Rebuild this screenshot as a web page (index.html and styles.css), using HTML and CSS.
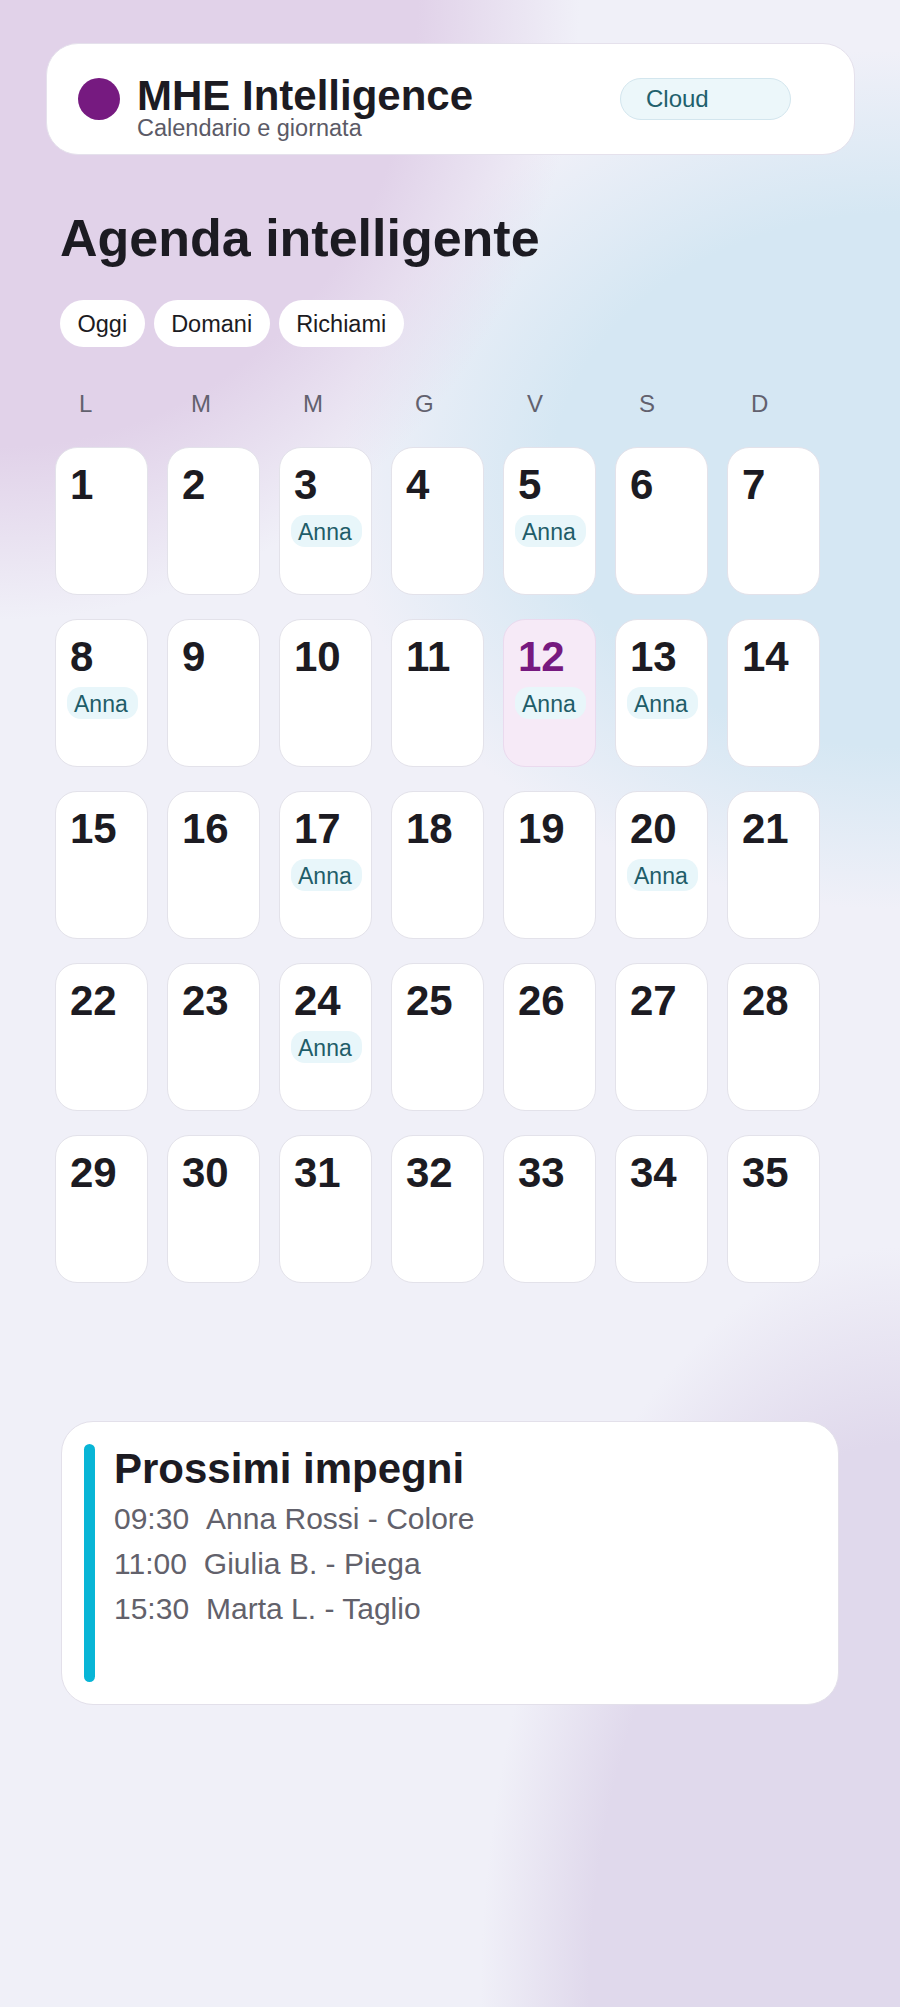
FILE: index.html
```html
<!DOCTYPE html>
<html lang="it">
<head>
<meta charset="utf-8">
<title>MHE Intelligence - Agenda</title>
<link rel="stylesheet" href="styles.css">
</head>
<body>
<div class="page">
  <header class="topbar">
    <span class="logo"></span>
    <div class="brand">
      <div class="brand-title">MHE Intelligence</div>
      <div class="brand-sub">Calendario e giornata</div>
    </div>
    <span class="status">Cloud</span>
  </header>

  <h1 class="heading">Agenda intelligente</h1>

  <nav class="chips">
    <button class="chip">Oggi</button>
    <button class="chip">Domani</button>
    <button class="chip">Richiami</button>
  </nav>

  <div class="weekdays">
    <span>L</span><span>M</span><span>M</span><span>G</span><span>V</span><span>S</span><span>D</span>
  </div>

  <div class="calendar">
    <div class="day"><span class="num">1</span></div>
    <div class="day"><span class="num">2</span></div>
    <div class="day"><span class="num">3</span><span class="tag">Anna</span></div>
    <div class="day"><span class="num">4</span></div>
    <div class="day"><span class="num">5</span><span class="tag">Anna</span></div>
    <div class="day"><span class="num">6</span></div>
    <div class="day"><span class="num">7</span></div>

    <div class="day"><span class="num">8</span><span class="tag">Anna</span></div>
    <div class="day"><span class="num">9</span></div>
    <div class="day"><span class="num">10</span></div>
    <div class="day"><span class="num">11</span></div>
    <div class="day today"><span class="num">12</span><span class="tag">Anna</span></div>
    <div class="day"><span class="num">13</span><span class="tag">Anna</span></div>
    <div class="day"><span class="num">14</span></div>

    <div class="day"><span class="num">15</span></div>
    <div class="day"><span class="num">16</span></div>
    <div class="day"><span class="num">17</span><span class="tag">Anna</span></div>
    <div class="day"><span class="num">18</span></div>
    <div class="day"><span class="num">19</span></div>
    <div class="day"><span class="num">20</span><span class="tag">Anna</span></div>
    <div class="day"><span class="num">21</span></div>

    <div class="day"><span class="num">22</span></div>
    <div class="day"><span class="num">23</span></div>
    <div class="day"><span class="num">24</span><span class="tag">Anna</span></div>
    <div class="day"><span class="num">25</span></div>
    <div class="day"><span class="num">26</span></div>
    <div class="day"><span class="num">27</span></div>
    <div class="day"><span class="num">28</span></div>

    <div class="day"><span class="num">29</span></div>
    <div class="day"><span class="num">30</span></div>
    <div class="day"><span class="num">31</span></div>
    <div class="day"><span class="num">32</span></div>
    <div class="day"><span class="num">33</span></div>
    <div class="day"><span class="num">34</span></div>
    <div class="day"><span class="num">35</span></div>
  </div>

  <section class="upcoming">
    <span class="accent"></span>
    <div class="upcoming-body">
      <h2 class="upcoming-title">Prossimi impegni</h2>
      <ul class="appts">
        <li><span class="time">09:30</span><span>Anna Rossi - Colore</span></li>
        <li><span class="time">11:00</span><span>Giulia B. - Piega</span></li>
        <li><span class="time">15:30</span><span>Marta L. - Taglio</span></li>
      </ul>
    </div>
  </section>
</div>
</body>
</html>
```

FILE: styles.css
```css
* { box-sizing: border-box; }

html, body {
  margin: 0;
  padding: 0;
}

body {
  min-height: 2007px;
  font-family: "Liberation Sans", Arial, sans-serif;
  color: #1c1b22;
  background:
    radial-gradient(ellipse 580px 620px at 0 0, #e1d2e9 0%, #e1d2e9 72%, rgba(225, 210, 233, 0) 100%),
    radial-gradient(ellipse 560px 430px at 100% 480px, #d5e7f3 0%, #d5e7f3 62%, rgba(213, 231, 243, 0) 100%),
    radial-gradient(ellipse 420px 760px at 100% 100%, #e0d9ec 0%, #e0d9ec 74%, rgba(224, 217, 236, 0) 100%),
    #f0f0f8;
}

.page {
  padding-top: 43px;
  padding-bottom: 40px;
}

/* Header card */
.topbar {
  display: flex;
  align-items: center;
  width: 809px;
  height: 112px;
  margin-left: 46px;
  padding: 0 31px;
  background: #ffffff;
  border: 1px solid #e5e1ec;
  border-radius: 32px;
}

.logo {
  flex: none;
  width: 42px;
  height: 42px;
  margin-bottom: 1px;
  border-radius: 50%;
  background: #761a80;
}

.brand {
  flex: 1;
  margin-left: 17px;
  margin-top: 19px;
}

.brand-title {
  font-size: 42px;
  font-weight: 700;
  line-height: 38px;
  color: #1c1b22;
}

.brand-sub {
  margin-top: 2px;
  font-size: 23.5px;
  line-height: 23.5px;
  color: #5b5a66;
}

.status {
  flex: none;
  width: 171px;
  height: 42px;
  margin-right: 32px;
  padding-left: 25px;
  font-size: 24px;
  line-height: 40px;
  color: #21606c;
  background: #ecf7fa;
  border: 1px solid #d3e6ee;
  border-radius: 21px;
}

/* Title */
.heading {
  margin: 53px 0 0 60px;
  font-size: 52px;
  font-weight: 700;
  line-height: 60px;
  color: #1c1b22;
}

/* Chips */
.chips {
  display: flex;
  gap: 9px;
  margin: 32px 0 0 60px;
}

.chip {
  height: 47px;
  padding: 2px 17.5px 0;
  font-family: inherit;
  font-size: 23.5px;
  line-height: 45px;
  color: #1c1b22;
  background: #ffffff;
  border: none;
  border-radius: 24px;
}

/* Week grid */
.weekdays,
.calendar {
  display: grid;
  grid-template-columns: repeat(7, 93px);
  column-gap: 19px;
  margin-left: 55px;
}

.weekdays {
  margin-top: 43px;
  font-size: 24px;
  line-height: 28px;
  color: #62616e;
}

.weekdays span {
  padding-left: 24px;
}

.calendar {
  margin-top: 29px;
  row-gap: 24px;
}

.day {
  display: flex;
  flex-direction: column;
  align-items: flex-start;
  height: 148px;
  padding: 16px 11px 0;
  background: #ffffff;
  border: 1px solid #e3e2ea;
  border-radius: 22px;
}

.num {
  padding-left: 3px;
  font-size: 42px;
  font-weight: 700;
  line-height: 42px;
  color: #1c1b22;
}

.tag {
  margin-top: 9px;
  height: 32px;
  padding: 2px 10px 0 7px;
  font-size: 23px;
  line-height: 30px;
  color: #1f5d69;
  background: #e8f6fa;
  border-radius: 14px;
}

.today {
  background: #f6eaf7;
  border-color: #eadaee;
}

.today .num {
  color: #76197f;
}

/* Upcoming card */
.upcoming {
  display: flex;
  gap: 19px;
  width: 778px;
  margin: 138px 0 0 61px;
  padding: 22px;
  background: #ffffff;
  border: 1px solid #e3e0ea;
  border-radius: 32px;
}

.accent {
  flex: none;
  width: 11px;
  height: 238px;
  border-radius: 6px;
  background: #08b5d6;
}

.upcoming-body {
  padding-top: 1px;
}

.upcoming-title {
  margin: 0;
  font-size: 42px;
  font-weight: 700;
  line-height: 48px;
  color: #1c1b22;
}

.appts {
  list-style: none;
  margin: 3px 0 0;
  padding: 0;
}

.appts li {
  display: flex;
  gap: 17px;
  font-size: 30px;
  line-height: 45px;
  color: #62616b;
}
```
